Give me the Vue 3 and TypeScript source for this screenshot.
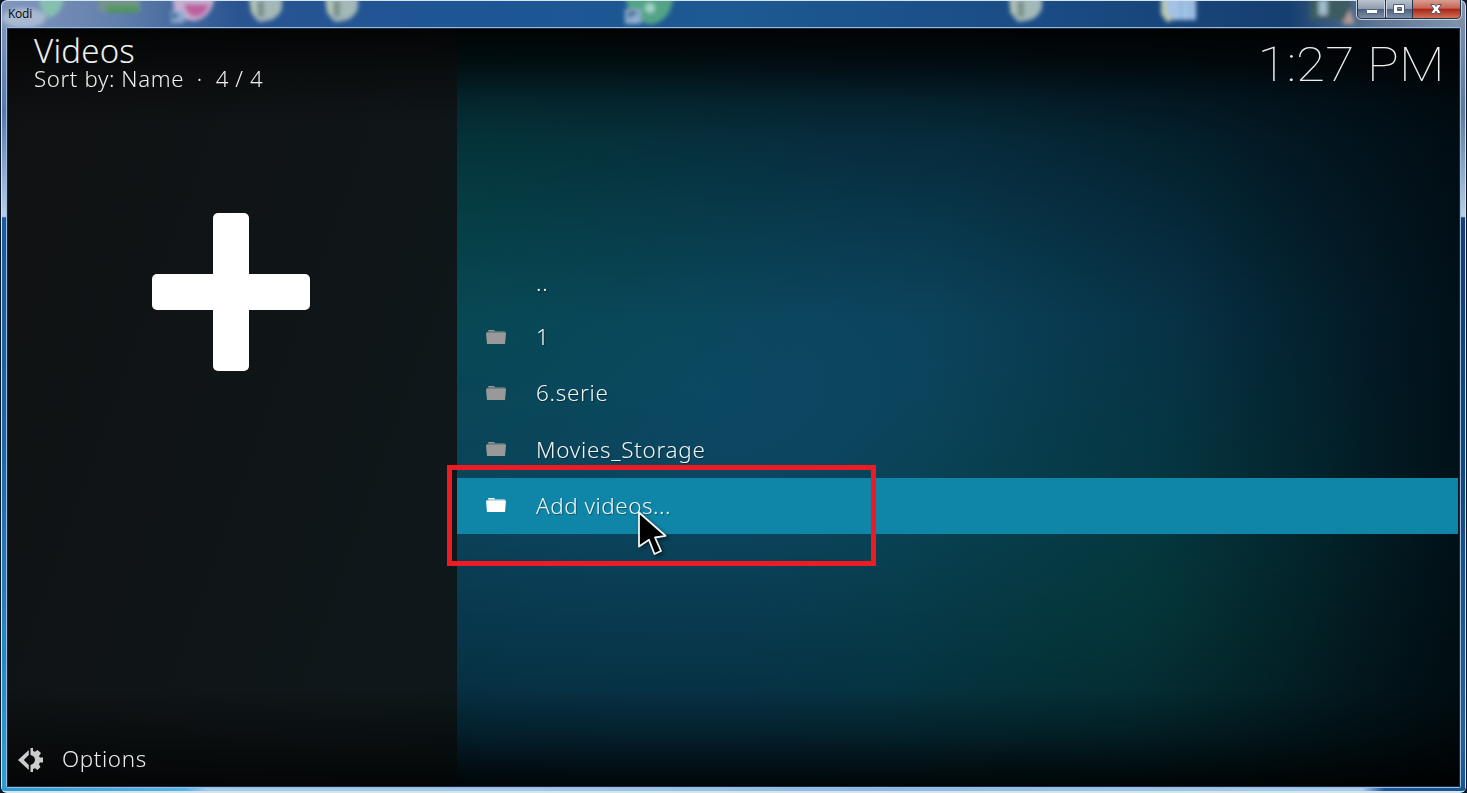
<script setup lang="ts">
interface Entry { label: string; folder: boolean; active?: boolean }

const entries: Entry[] = [
  { label: '..', folder: false },
  { label: '1', folder: true },
  { label: '6.serie', folder: true },
  { label: 'Movies_Storage', folder: true },
  { label: 'Add videos...', folder: true, active: true },
]
</script>

<template>
  <div class="window">
    <svg class="glass" width="1467" height="793" viewBox="0 0 1467 793" aria-hidden="true">
      <defs>
        <linearGradient id="top" x1="0" x2="1" y1="0" y2="0">
          <stop offset="0" stop-color="#8296bd" /><stop offset=".08" stop-color="#617fac" />
          <stop offset=".16" stop-color="#2a5491" /><stop offset=".3" stop-color="#1e5595" />
          <stop offset=".5" stop-color="#1d5992" /><stop offset=".72" stop-color="#1a4b84" />
          <stop offset=".88" stop-color="#163f70" /><stop offset=".94" stop-color="#5e7694" />
          <stop offset="1" stop-color="#8294ad" />
        </linearGradient>
        <linearGradient id="left" x1="0" x2="0" y1="0" y2="1">
          <stop offset="0" stop-color="#8296bd" /><stop offset=".12" stop-color="#5878ad" />
          <stop offset=".19" stop-color="#8aa5cf" /><stop offset=".255" stop-color="#bccde5" />
          <stop offset=".257" stop-color="#1b5a9c" /><stop offset=".55" stop-color="#1d67a7" />
          <stop offset="1" stop-color="#2f9ed3" />
        </linearGradient>
        <linearGradient id="right" x1="0" x2="0" y1="0" y2="1">
          <stop offset="0" stop-color="#7f8ea5" /><stop offset=".12" stop-color="#60799b" />
          <stop offset=".19" stop-color="#8ea4c2" /><stop offset=".255" stop-color="#c0cfe0" />
          <stop offset=".257" stop-color="#153f75" /><stop offset=".6" stop-color="#174781" />
          <stop offset=".93" stop-color="#2d609b" /><stop offset="1" stop-color="#195490" />
        </linearGradient>
        <linearGradient id="bottom" x1="0" x2="1" y1="0" y2="0">
          <stop offset="0" stop-color="#2b9bd0" /><stop offset=".125" stop-color="#57b4e2" />
          <stop offset=".14" stop-color="#a3c9ee" /><stop offset=".35" stop-color="#a3c7ec" />
          <stop offset=".6" stop-color="#8db8e2" /><stop offset=".93" stop-color="#a9ccec" />
          <stop offset=".945" stop-color="#1d5592" /><stop offset="1" stop-color="#195490" />
        </linearGradient>
        <filter id="soft" x="-10%" y="-40%" width="120%" height="180%"><feGaussianBlur stdDeviation="1.9" /></filter>
        <clipPath id="bar"><rect x="2" y="1" width="1463" height="27" /></clipPath>
      </defs>
      <rect width="1467" height="793" fill="#07172b" />
      <rect x="1" y="0" width="1465" height="793" rx="6" fill="#d4e5f0" />
      <rect x="2" y="1" width="1463" height="28" rx="5" fill="url(#top)" />
      <rect x="2" y="20" width="6" height="770" fill="url(#left)" />
      <rect x="1458" y="20" width="7" height="770" fill="url(#right)" />
      <rect x="2" y="786" width="1463" height="5" rx="3" fill="url(#bottom)" />
      <g clip-path="url(#bar)">
        <g filter="url(#soft)">
          <ellipse cx="24" cy="18" rx="22" ry="10" fill="#c1cede" opacity=".65" />
          <path d="M38 -6H64Q64 13 49 18Q39 12 38 -6Z" fill="#84bfb0" />
          <rect x="98" y="-5" width="42" height="16" fill="#74938c" />
          <path d="M107 9H138" stroke="#4d9a52" stroke-width="6" />
          <path d="M172 -6H215Q213 17 195 21Q181 21 174 10Z" fill="#c7b1d3" />
          <path d="M184 4H209Q206 17 194 17Q186 15 184 4Z" fill="#bb619f" />
          <path d="M171 11H184V23H171Z" fill="#87a9d0" />
          <path d="M174 19V15H178" fill="none" stroke="#275487" stroke-width="3" />
          <path d="M249 -7H282V8Q280 16 271 20L260 22Q249 17 249 -7M325 -7H358V8Q356 16 347 20L336 22Q325 17 325 -7M1009 -7H1042V8Q1039 17 1030 20L1019 22Q1009 17 1009 -7" fill="#a3b8b8" />
          <path d="M261 1V17M337 1V17M1021 1V17" stroke="#788f87" stroke-width="6" />
          <path d="M253 0V14M329 0V14M1012 0V14" stroke="#c3ccad" stroke-width="3" />
          <path d="M626 -8H674Q673 18 654 24Q642 26 637 15Q626 8 626 0Z" fill="#53a486" />
          <circle cx="650" cy="8" r="5" fill="#a2d3c8" />
          <rect x="625" y="9" width="16" height="15" fill="#8faed0" />
          <path d="M630 18V13H637" fill="none" stroke="#2a5786" stroke-width="3" />
          <path d="M1161 -5H1196V20H1170Q1162 15 1161 -5Z" fill="#a3c2e6" />
          <path d="M1164 0V13L1170 21" fill="none" stroke="#bac9ad" stroke-width="6" />
          <path d="M1181 0V20M1190 0V20" stroke="#84aada" stroke-width="2" />
          <path d="M1310 -4H1350V20H1310Z" fill="#3e5c61" />
          <path d="M1323 0V15" stroke="#a1bdca" stroke-width="9" />
          <path d="M1350 9L1355 24H1342Z" fill="#b29c97" />
        </g>
      </g>
      <rect x="6.5" y="27.5" width="1454" height="760" rx="1" fill="none" stroke="#9cbadb" />
      <rect x="7.5" y="28.5" width="1452" height="758" fill="none" stroke="#172a40" />
    </svg>

    <header class="titlebar">
      <span>Kodi</span>
      <svg class="controls" width="108" height="21" viewBox="0 0 108 21" aria-label="Window controls">
        <defs>
          <linearGradient id="silver" x1="0" x2="0" y1="0" y2="1">
            <stop offset="0" stop-color="#bac4d0" /><stop offset=".46" stop-color="#8e9cae" />
            <stop offset=".5" stop-color="#4d607e" /><stop offset="1" stop-color="#8395ad" />
          </linearGradient>
          <linearGradient id="red" x1="0" x2="0" y1="0" y2="1">
            <stop offset="0" stop-color="#d99d91" /><stop offset=".46" stop-color="#c66554" />
            <stop offset=".5" stop-color="#a92415" /><stop offset="1" stop-color="#d07055" />
          </linearGradient>
        </defs>
        <path d="M1 0H106V15Q106 19 101 19H6Q1 19 1 15Z" fill="url(#silver)" />
        <path d="M57 0H105V14Q105 18 101 18H57Z" fill="url(#red)" />
        <path d="M1.5 0V14Q1.5 18.5 6 18.5H101Q104.5 18.5 104.5 14V0M29.5 0V18M56.5 0V18" fill="none" stroke="#263449" />
        <path d="M.5 0V15Q.5 19.5 6 19.5H101Q105.5 19.5 105.5 14V0M30.5 1V17M28.5 1V17" fill="none" stroke="#d1dce8" stroke-width=".9" />
        <rect x="10.5" y="9.5" width="11" height="4" rx="1" fill="#fff" stroke="#506078" />
        <path fill-rule="evenodd" d="M37.5 4.5H48.5V13.5H37.5ZM41.5 7.5V10.5H45.5V7.5Z" fill="#fff" stroke="#506078" />
        <path d="M74.5 4.5H78.5L80 6.5L81.5 4.5H85.5L82.3 8.9L85.5 13.5H81.5L80 11.2L78.5 13.5H74.5L77.7 8.9Z" fill="#fff" stroke="#5d5263" />
      </svg>
    </header>

    <main class="screen">
      <aside class="side">
        <div class="heading">
          <h1>Videos</h1>
          <p>Sort by: Name&nbsp; ·&nbsp; 4 / 4</p>
        </div>
        <svg class="plus" width="158" height="158" viewBox="0 0 158 158">
          <rect x="61" width="36" height="158" rx="5" fill="#fff" />
          <rect y="61" width="158" height="36" rx="5" fill="#fff" />
        </svg>
        <div class="options">
          <svg width="26" height="24" viewBox="0 0 26 24">
            <path d="M10.8 2V7L5.8 12L10.8 17V22L0 12Z" fill="#ccc" />
            <path d="M12.5 0H15V3L17 3.8L19.5 2L23 5L21 8L21.8 9.5H25V14.5H21.8L21 16.5L22.5 19L19.5 22L17 20.2L15 21V24H12.5V17Q17 15.5 17 12Q17 8 12.5 7Z" fill="#ccc" />
          </svg>
          <span>Options</span>
        </div>
      </aside>
      <section class="content">
        <div class="clock">1:27 PM</div>
        <ul class="list">
          <li v-for="entry in entries" :key="entry.label" :class="{ active: entry.active }">
            <svg v-if="entry.folder" width="20" height="14" viewBox="0 0 20 14">
              <path d="M1 4V2H2L3 0H8L9 1.2H18.5Q19.5 1.2 19.5 3V5H1Z" fill="currentColor" opacity=".65" />
              <path d="M2.5 0H8L8.8 1H2Z" fill="currentColor" />
              <path d="M0 2.7H20L19 14H1Z" fill="currentColor" />
            </svg>
            <i v-else />
            <span>{{ entry.label }}</span>
          </li>
        </ul>
      </section>
    </main>

    <div class="marker" />
    <svg class="cursor" width="36" height="50" viewBox="0 0 36 50">
      <path d="M2 1.5V35.5L12 28.8L17.5 43L24 40L18 26.5L28.5 24.8Z" fill="#000" stroke="#f1f5f6" stroke-width="1.8" stroke-linejoin="round" />
    </svg>
  </div>
</template>

<style>
html, body { margin: 0; overflow: hidden; background: #07172b; }
</style>

<style scoped>
.window { position: relative; box-sizing: border-box; width: 1467px; height: 793px; padding: 0 8px; overflow: hidden; font-family: "Noto Sans", sans-serif; }
.glass { position: absolute; inset: 0; }
.titlebar { position: relative; display: flex; justify-content: space-between; height: 29px; color: #050505; font: 12px/27px "Open Sans", sans-serif; letter-spacing: -.25px; }
.controls { margin-right: -5px; }
.screen { position: relative; display: flex; width: 1451px; height: 757px; overflow: hidden; background:
  linear-gradient(180deg, rgba(0,0,0,.94) 0, rgba(0,0,0,.76) 35px, rgba(0,0,0,.44) 72px, rgba(0,0,0,.28) 110px, rgba(0,0,0,.18) 170px, transparent 290px, transparent 500px, rgba(0,0,0,.14) 660px, rgba(0,0,0,.4) 705px, rgba(0,0,0,.88) 757px),
  linear-gradient(97deg, transparent 62%, rgba(0,5,8,.16) 78%, rgba(0,5,8,.42) 88%, rgba(0,5,8,.8) 100%),
  radial-gradient(ellipse 400px 340px at 440px 180px, rgba(4,78,76,.65), rgba(4,74,76,.4) 50%, rgba(4,70,80,0)),
  radial-gradient(ellipse 440px 300px at 1170px 590px, rgba(5,72,71,.8), rgba(4,68,72,.5) 50%, rgba(4,62,74,0)),
  radial-gradient(ellipse 860px 510px at 680px 355px, #0c4865 0, #0b435c 32%, #083a50 60%, #052f43 80%, #04273a 100%);
}
.side { display: flex; flex-direction: column; box-sizing: border-box; width: 449px; padding: 4px 10px 9px; background: linear-gradient(180deg, rgba(0,0,0,.8), rgba(0,0,0,.35) 45px, transparent 95px, transparent 660px, rgba(0,0,0,.75)), linear-gradient(110deg, #101112, #0f171a 80%, #0d1719); }
.heading { height: 180px; padding-left: 16px; color: #eee; }
h1 { margin: 0; font-size: 33px; font-weight: 300; line-height: 36px; letter-spacing: .2px; }
p { margin: -1px 0 0; font-size: 21.5px; font-weight: 300; line-height: 21px; letter-spacing: .6px; white-space: nowrap; transform: scaleX(1.033); transform-origin: left; }
.plus { align-self: center; margin-left: -4px; }
.options { display: flex; align-items: center; gap: 18px; height: 36px; margin-top: auto; color: #e8eaeb; font-size: 21.5px; font-weight: 300; letter-spacing: .6px; }
.options svg { position: relative; top: 1px; }
.options span { margin-top: -2px; transform: scaleX(1.04); transform-origin: left; }
.content { flex: 1; min-width: 0; }
.clock { height: 228px; padding: 7px 13px 0 0; box-sizing: border-box; color: #eee; font: 100 49px/58px Roboto, sans-serif; text-align: right; transform: scaleX(1.085); transform-origin: 1006px 0; }
.list { margin: 0; padding: 0; list-style: none; }
li { display: flex; align-items: center; box-sizing: border-box; width: 1001px; height: 56px; padding: 0 29px; gap: 30px; color: #999; }
li:first-child { height: 53px; }
li svg, li i { width: 20px; height: 14px; flex: none; margin-top: -2px; }
li span { margin-top: -3px; color: #f2f5f6; font-size: 21.5px; font-weight: 300; line-height: 29px; letter-spacing: .65px; transform: scaleX(1.045); transform-origin: left; text-shadow: 1px 1px 1px rgba(0,0,0,.35); }
li:nth-child(n+4) span { margin-top: -1px; }
li.active span { letter-spacing: .5px; }
li.active { color: #fff; background: #0f86a8; }
.marker { position: absolute; left: 447px; top: 465px; box-sizing: border-box; width: 429px; height: 101px; border: 5px solid #ed1c24; }
.cursor { position: absolute; left: 637px; top: 511px; filter: drop-shadow(2px 2px 2px rgba(0,0,0,.5)); }
</style>
